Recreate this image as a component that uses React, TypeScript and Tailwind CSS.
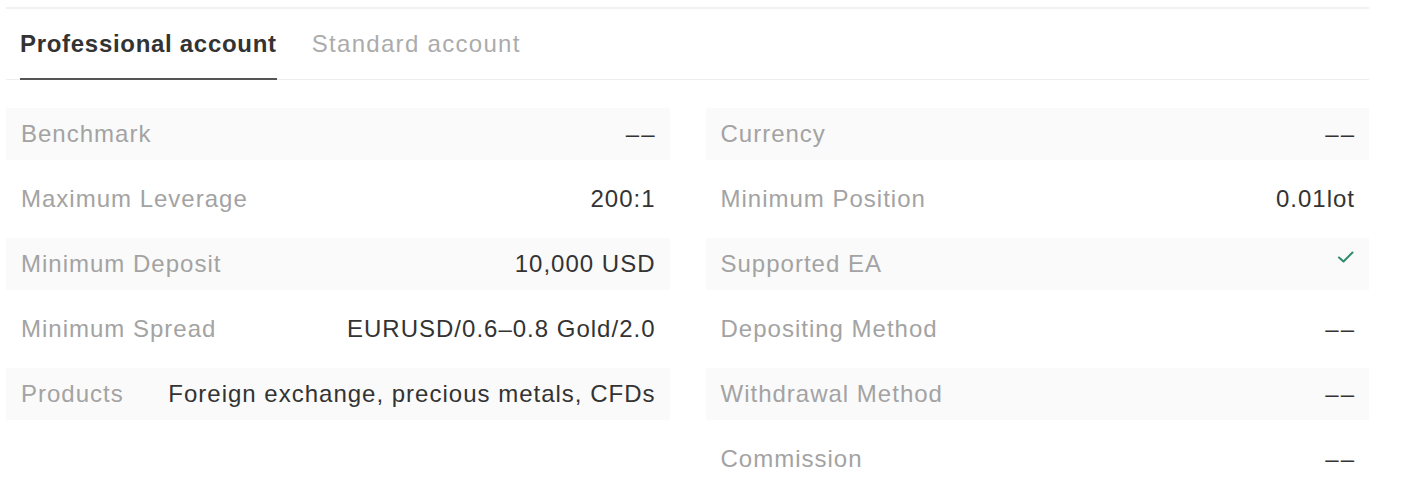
import React from "react";

type Row = { label: string; value: React.ReactNode };

const Dash = () => <span className="tracking-[2px] mr-[-1px]">––</span>;

const left: Row[] = [
  { label: "Benchmark", value: <Dash /> },
  { label: "Maximum Leverage", value: "200:1" },
  { label: "Minimum Deposit", value: "10,000 USD" },
  { label: "Minimum Spread", value: "EURUSD/0.6–0.8 Gold/2.0" },
  { label: "Products", value: "Foreign exchange, precious metals, CFDs" },
];

const Check = () => (
  <svg width="18" height="14" viewBox="0 0 18 14" className="mb-[14px]">
    <path d="M2 7.5 L6.5 11.5 L15.5 2.5" fill="none" stroke="#2f8a67" strokeWidth="2" strokeLinecap="round" strokeLinejoin="round" />
  </svg>
);

const right: Row[] = [
  { label: "Currency", value: <Dash /> },
  { label: "Minimum Position", value: "0.01lot" },
  { label: "Supported EA", value: <Check /> },
  { label: "Depositing Method", value: <Dash /> },
  { label: "Withdrawal Method", value: <Dash /> },
  { label: "Commission", value: <Dash /> },
];

function Column({ rows }: { rows: Row[] }) {
  return (
    <div className="flex flex-col gap-[13px]">
      {rows.map((r, i) => (
        <div
          key={r.label}
          className={`flex h-[52px] items-center justify-between pl-[15px] pr-[14px] ${i % 2 === 0 ? "bg-[#fafafa]" : "bg-white"}`}
        >
          <span className="text-[#a3a3a3] whitespace-nowrap">{r.label}</span>
          <span className="text-[#333333] whitespace-nowrap flex items-center">{r.value}</span>
        </div>
      ))}
    </div>
  );
}

export default function App() {
  return (
    <div
      className="w-[1412px] h-[502px] bg-white pt-[7px] text-[24px] leading-none tracking-[1px]"
      style={{ fontFamily: '"Liberation Sans", Arial, sans-serif' }}
    >
      <div className="ml-[6px] w-[1363px]">
        <div className="h-[2px] bg-[#f1f1f1]" />
        <div className="flex h-[71px] border-b border-[#eeeeee] pl-[14px] gap-[35px]">
          <div className="flex items-center border-b-2 border-[#555555] mb-[-1px] pt-[1px]">
            <span className="text-[#333333] font-semibold tracking-[0.7px]">Professional account</span>
          </div>
          <div className="flex items-center pb-[1px]">
            <span className="text-[#ababab] tracking-[1.3px]">Standard account</span>
          </div>
        </div>
        <div className="grid grid-cols-2 gap-[36px] mt-[28px]">
          <Column rows={left} />
          <Column rows={right} />
        </div>
      </div>
    </div>
  );
}
